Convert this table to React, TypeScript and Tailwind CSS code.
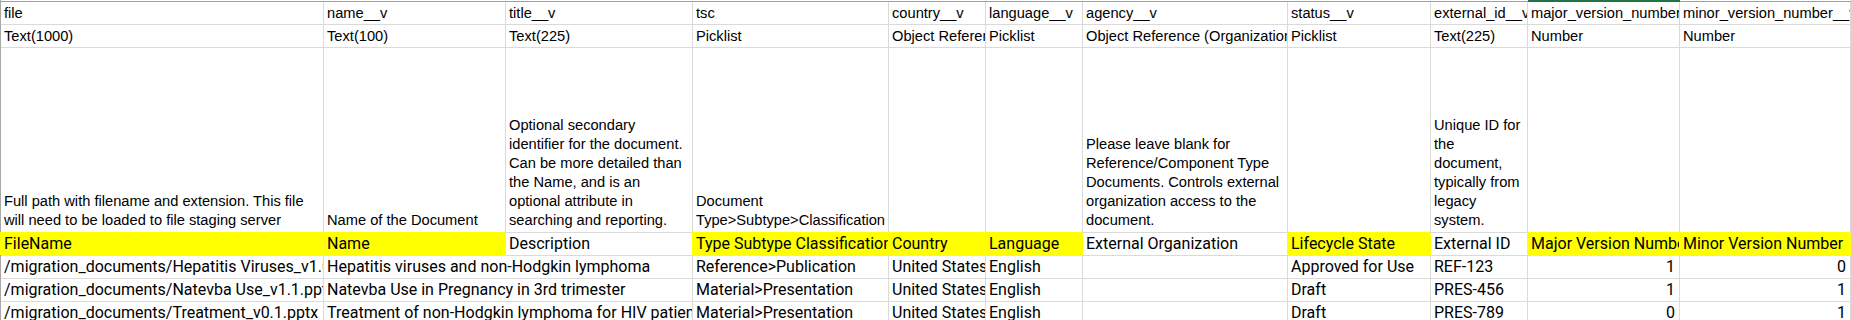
import clsx from "clsx";

type Row = {
  file: string;
  name: string;
  tsc: string;
  country: string;
  language: string;
  agency: string;
  status: string;
  extId: string;
  major: string;
  minor: string;
};

const fieldNames = [
  "file",
  "name__v",
  "title__v",
  "tsc",
  "country__v",
  "language__v",
  "agency__v",
  "status__v",
  "external_id__v",
  "major_version_number__v",
  "minor_version_number__v",
];

const fieldTypes = [
  "Text(1000)",
  "Text(100)",
  "Text(225)",
  "Picklist",
  "Object Reference (Country)",
  "Picklist",
  "Object Reference (Organization)",
  "Picklist",
  "Text(225)",
  "Number",
  "Number",
];

const notes = [
  "Full path with filename and extension. This file will need to be loaded to file staging server",
  "Name of the Document",
  "Optional secondary identifier for the document. Can be more detailed than the Name, and is an optional attribute in searching and reporting.",
  "Document Type>Subtype>Classification",
  "",
  "",
  "Please leave blank for Reference/Component Type Documents. Controls external organization access to the document.",
  "",
  "Unique ID for the document, typically from legacy system.",
  "",
  "",
];

// label + whether the cell is highlighted
const labels: [string, boolean][] = [
  ["FileName", true],
  ["Name", true],
  ["Description", false],
  ["Type Subtype Classification", true],
  ["Country", true],
  ["Language", true],
  ["External Organization", false],
  ["Lifecycle State", true],
  ["External ID", false],
  ["Major Version Number", true],
  ["Minor Version Number", true],
];

const rows: Row[] = [
  {
    file: "/migration_documents/Hepatitis Viruses_v1.0.pdf",
    name: "Hepatitis viruses and non-Hodgkin lymphoma",
    tsc: "Reference>Publication",
    country: "United States",
    language: "English",
    agency: "",
    status: "Approved for Use",
    extId: "REF-123",
    major: "1",
    minor: "0",
  },
  {
    file: "/migration_documents/Natevba Use_v1.1.pptx",
    name: "Natevba Use in Pregnancy in 3rd trimester",
    tsc: "Material>Presentation",
    country: "United States",
    language: "English",
    agency: "",
    status: "Draft",
    extId: "PRES-456",
    major: "1",
    minor: "1",
  },
  {
    file: "/migration_documents/Treatment_v0.1.pptx",
    name: "Treatment of non-Hodgkin lymphoma for HIV patients",
    tsc: "Material>Presentation",
    country: "United States",
    language: "English",
    agency: "",
    status: "Draft",
    extId: "PRES-789",
    major: "0",
    minor: "1",
  },
];

const arial = "font-['Liberation_Sans',Arial,sans-serif] text-[14.67px] leading-[19px]";
const aptos = "font-['Roboto','Liberation_Sans',sans-serif] text-[16px] leading-[22px]";

function Cell({
  children,
  yellow,
  right,
  className,
}: {
  children?: React.ReactNode;
  yellow?: boolean;
  right?: boolean;
  className?: string;
}) {
  return (
    <div
      className={clsx(
        "overflow-hidden border-r border-b text-black",
        yellow
          ? "bg-[#ffff00] border-[#ffff00] shadow-[-1px_-1px_0_#ffff00]"
          : "bg-white border-[#dadada]",
        right ? "text-right pl-[3px] pr-[4px]" : "px-[3px]",
        className
      )}
    >
      {children}
    </div>
  );
}

export default function App() {
  return (
    <div className="w-[1851px] h-[320px] overflow-hidden bg-white">
      <div className="grid grid-cols-[323px_182px_187px_196px_97px_97px_205px_143px_97px_152px_171px] grid-rows-[2px_23px_23px_185px_23px_23px_23px_23px] border-l border-[#a8a8a8] w-[1851px]">
        {fieldNames.map((f, i) => (
          <div
            key={"top" + f}
            className={
              i === 9
                ? "bg-[#217346]"
                : "border-b border-[#a0a0a0] bg-white"
            }
          />
        ))}

        {fieldNames.map((f) => (
          <Cell key={f} className={clsx(arial, "whitespace-nowrap flex items-end pb-[1px]")}>
            {f}
          </Cell>
        ))}

        {fieldTypes.map((t, i) => (
          <Cell key={"type" + i} className={clsx(arial, "whitespace-nowrap flex items-end pb-[1px]")}>
            {t}
          </Cell>
        ))}

        {notes.map((n, i) => (
          <Cell
            key={"note" + i}
            className={clsx(arial, "whitespace-normal flex flex-col justify-end pb-[2px]")}
          >
            <span>{n}</span>
          </Cell>
        ))}

        {labels.map(([l, y]) => (
          <Cell key={l} yellow={y} className={clsx(aptos, "whitespace-nowrap")}>
            {l}
          </Cell>
        ))}

        {rows.map((r) => (
          <>
            <Cell className={clsx(aptos, "whitespace-nowrap")}>{r.file}</Cell>
            {/* empty title__v cell: the name spills over it like in Excel */}
            <Cell className={clsx(aptos, "whitespace-nowrap col-span-2")}>{r.name}</Cell>
            <Cell className={clsx(aptos, "whitespace-nowrap")}>{r.tsc}</Cell>
            <Cell className={clsx(aptos, "whitespace-nowrap")}>{r.country}</Cell>
            <Cell className={clsx(aptos, "whitespace-nowrap")}>{r.language}</Cell>
            <Cell className={clsx(aptos, "whitespace-nowrap")}>{r.agency}</Cell>
            <Cell className={clsx(aptos, "whitespace-nowrap")}>{r.status}</Cell>
            <Cell className={clsx(aptos, "whitespace-nowrap")}>{r.extId}</Cell>
            <Cell right className={clsx(aptos, "whitespace-nowrap")}>{r.major}</Cell>
            <Cell right className={clsx(aptos, "whitespace-nowrap")}>{r.minor}</Cell>
          </>
        ))}
      </div>
    </div>
  );
}
